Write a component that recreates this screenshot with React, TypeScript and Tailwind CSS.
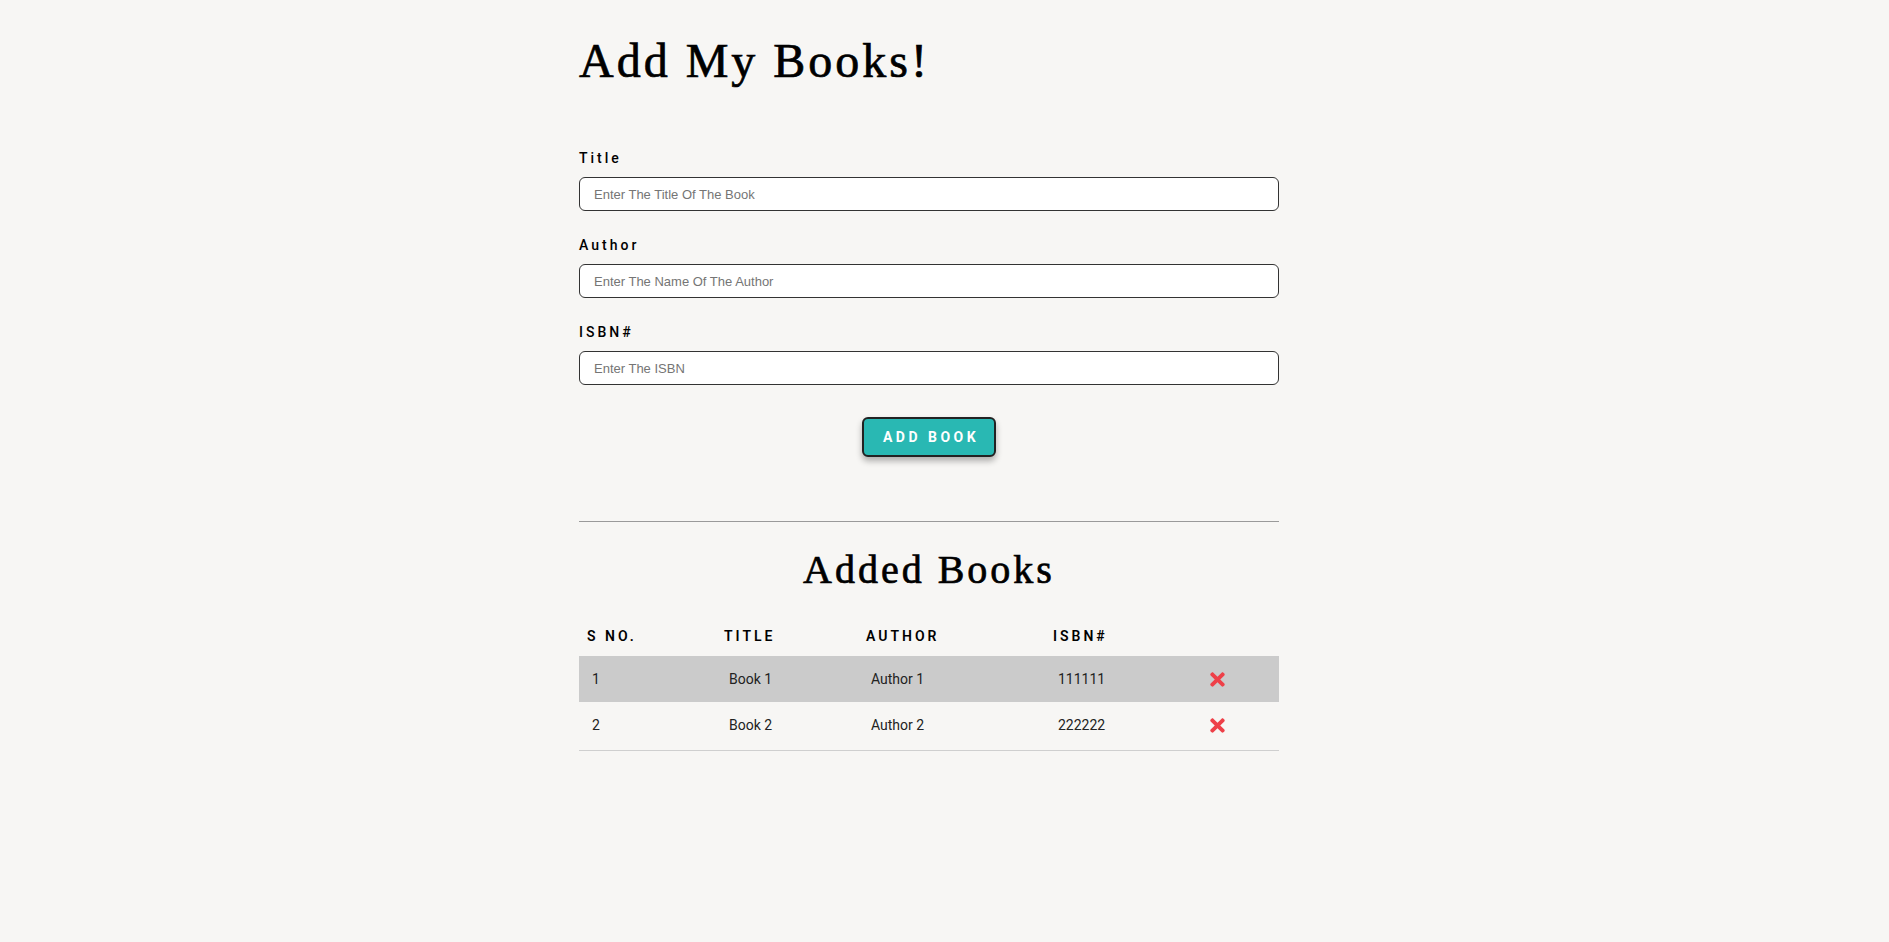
import { FaTimes } from 'react-icons/fa'

const books = [
  { id: 1, title: 'Book 1', author: 'Author 1', isbn: '111111' },
  { id: 2, title: 'Book 2', author: 'Author 2', isbn: '222222' },
]

const fields = [
  { label: 'Title', placeholder: 'Enter The Title Of The Book' },
  { label: 'Author', placeholder: 'Enter The Name Of The Author' },
  { label: 'ISBN#', placeholder: 'Enter The ISBN' },
]

const serif = "font-['Liberation_Serif','Times_New_Roman',serif] [-webkit-text-stroke:0.7px_black]"
const sans = "font-['Roboto','Liberation_Sans',sans-serif]"

export default function App() {
  return (
    <div className="min-h-screen bg-[#f7f6f4] text-[#111]">
      <div className="flex justify-center pr-[31px]">
        <div className="w-[700px]">
          <h1 className={`${serif} pt-[31px] text-[48px] leading-[60px] tracking-[3px] text-black`}>Add My Books!</h1>

          <form className="mt-[57px] flex flex-col gap-[24px]" onSubmit={(e) => e.preventDefault()}>
            {fields.map((field) => (
              <label key={field.label} className="flex flex-col">
                <span className={`${sans} mb-[9px] text-[14px] font-medium leading-[20px] tracking-[3px] text-black`}>{field.label}</span>
                <input
                  type="text"
                  placeholder={field.placeholder}
                  className="h-[34px] w-full rounded-[6px] border border-[#333] bg-white px-[14px] font-['Liberation_Sans',Arial,sans-serif] text-[13px] text-black placeholder:text-[#757575] focus:outline-none"
                />
              </label>
            ))}
          </form>

          <div className="mt-[32px] flex justify-center">
            <button
              type="button"
              className={`${sans} h-[40px] w-[134px] rounded-[6px] border-2 border-[#222] bg-[#29b8b3] pl-[4px] text-[14px] font-bold tracking-[3.5px] text-white shadow-[0_4px_6px_rgba(0,0,0,0.3)]`}
            >
              ADD BOOK
            </button>
          </div>

          <hr className="mt-[64px] border-0 border-t border-[#9a9a9a]" />

          <h2 className={`${serif} mt-[23px] text-center text-[40px] leading-[50px] tracking-[3px] text-black`}>Added Books</h2>

          <table className={`${sans} mt-[21px] w-full table-fixed border-collapse text-left`}>
            <colgroup>
              <col className="w-[137px]" />
              <col className="w-[142px]" />
              <col className="w-[187px]" />
              <col className="w-[142px]" />
              <col className="w-[92px]" />
            </colgroup>
            <thead>
              <tr className="h-[40px] text-[14px] tracking-[3px] text-black">
                <th className="pl-[8px] font-semibold">S NO.</th>
                <th className="pl-[8px] font-semibold">TITLE</th>
                <th className="pl-[8px] font-semibold">AUTHOR</th>
                <th className="pl-[8px] font-semibold">ISBN#</th>
                <th></th>
              </tr>
            </thead>
            <tbody className="text-[14px] text-[#222]">
              {books.map((book, i) => (
                <tr key={book.id} className={i === 0 ? 'h-[46px] bg-[#cbcbcb]' : 'h-[48px] border-b border-[#cfcfcf]'}>
                  <td className="pl-[13px]">{book.id}</td>
                  <td className="pl-[13px]">{book.title}</td>
                  <td className="pl-[13px]">{book.author}</td>
                  <td className="pl-[13px]">{book.isbn}</td>
                  <td className="pl-[20px]">
                    <FaTimes className="h-[21px] w-[21px] text-[#ee4048]" />
                  </td>
                </tr>
              ))}
            </tbody>
          </table>
        </div>
      </div>
    </div>
  )
}
